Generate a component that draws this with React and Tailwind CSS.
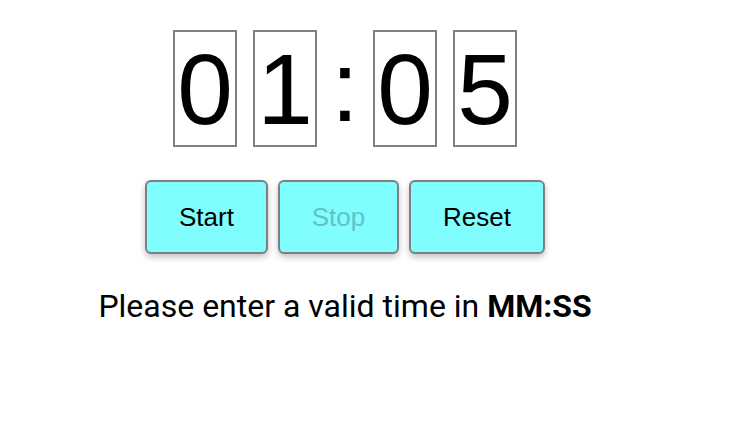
import React from 'react';

const Digit = ({ value }) => (
  <div className="w-[64px] h-[117px] border-2 border-[#808080] flex items-center justify-center text-[100px] leading-none">
    {value}
  </div>
);

const Btn = ({ children, disabled, w }) => (
  <button
    disabled={disabled}
    className={`${w} h-[74px] rounded-[6px] border-2 border-[#7f7f7f] bg-[#7ffdff] text-[26px] shadow-[0_3px_6px_rgba(0,0,0,0.25)] ${disabled ? 'text-[#62c2c4]' : 'text-black'}`}
  >
    {children}
  </button>
);

export default function App() {
  return (
    <div className="w-[690px] pt-[30px] flex flex-col items-center bg-white font-['Liberation_Sans',Arial,sans-serif] text-black">
      <div className="flex items-center">
        <Digit value="0" />
        <div className="w-[16px]" />
        <Digit value="1" />
        <div className="w-[56px] h-[117px] flex items-center justify-center text-[100px] leading-none pb-[6px]">:</div>
        <Digit value="0" />
        <div className="w-[16px]" />
        <Digit value="5" />
      </div>
      <div className="flex gap-[10px] mt-[33px]">
        <Btn w="w-[123px]">Start</Btn>
        <Btn w="w-[121px]" disabled>Stop</Btn>
        <Btn w="w-[136px]">Reset</Btn>
      </div>
      <p className="mt-[33px] font-['Roboto',sans-serif] text-[32px] leading-[38px]">
        Please enter a valid time in <strong className="font-bold">MM:SS</strong>
      </p>
    </div>
  );
}
